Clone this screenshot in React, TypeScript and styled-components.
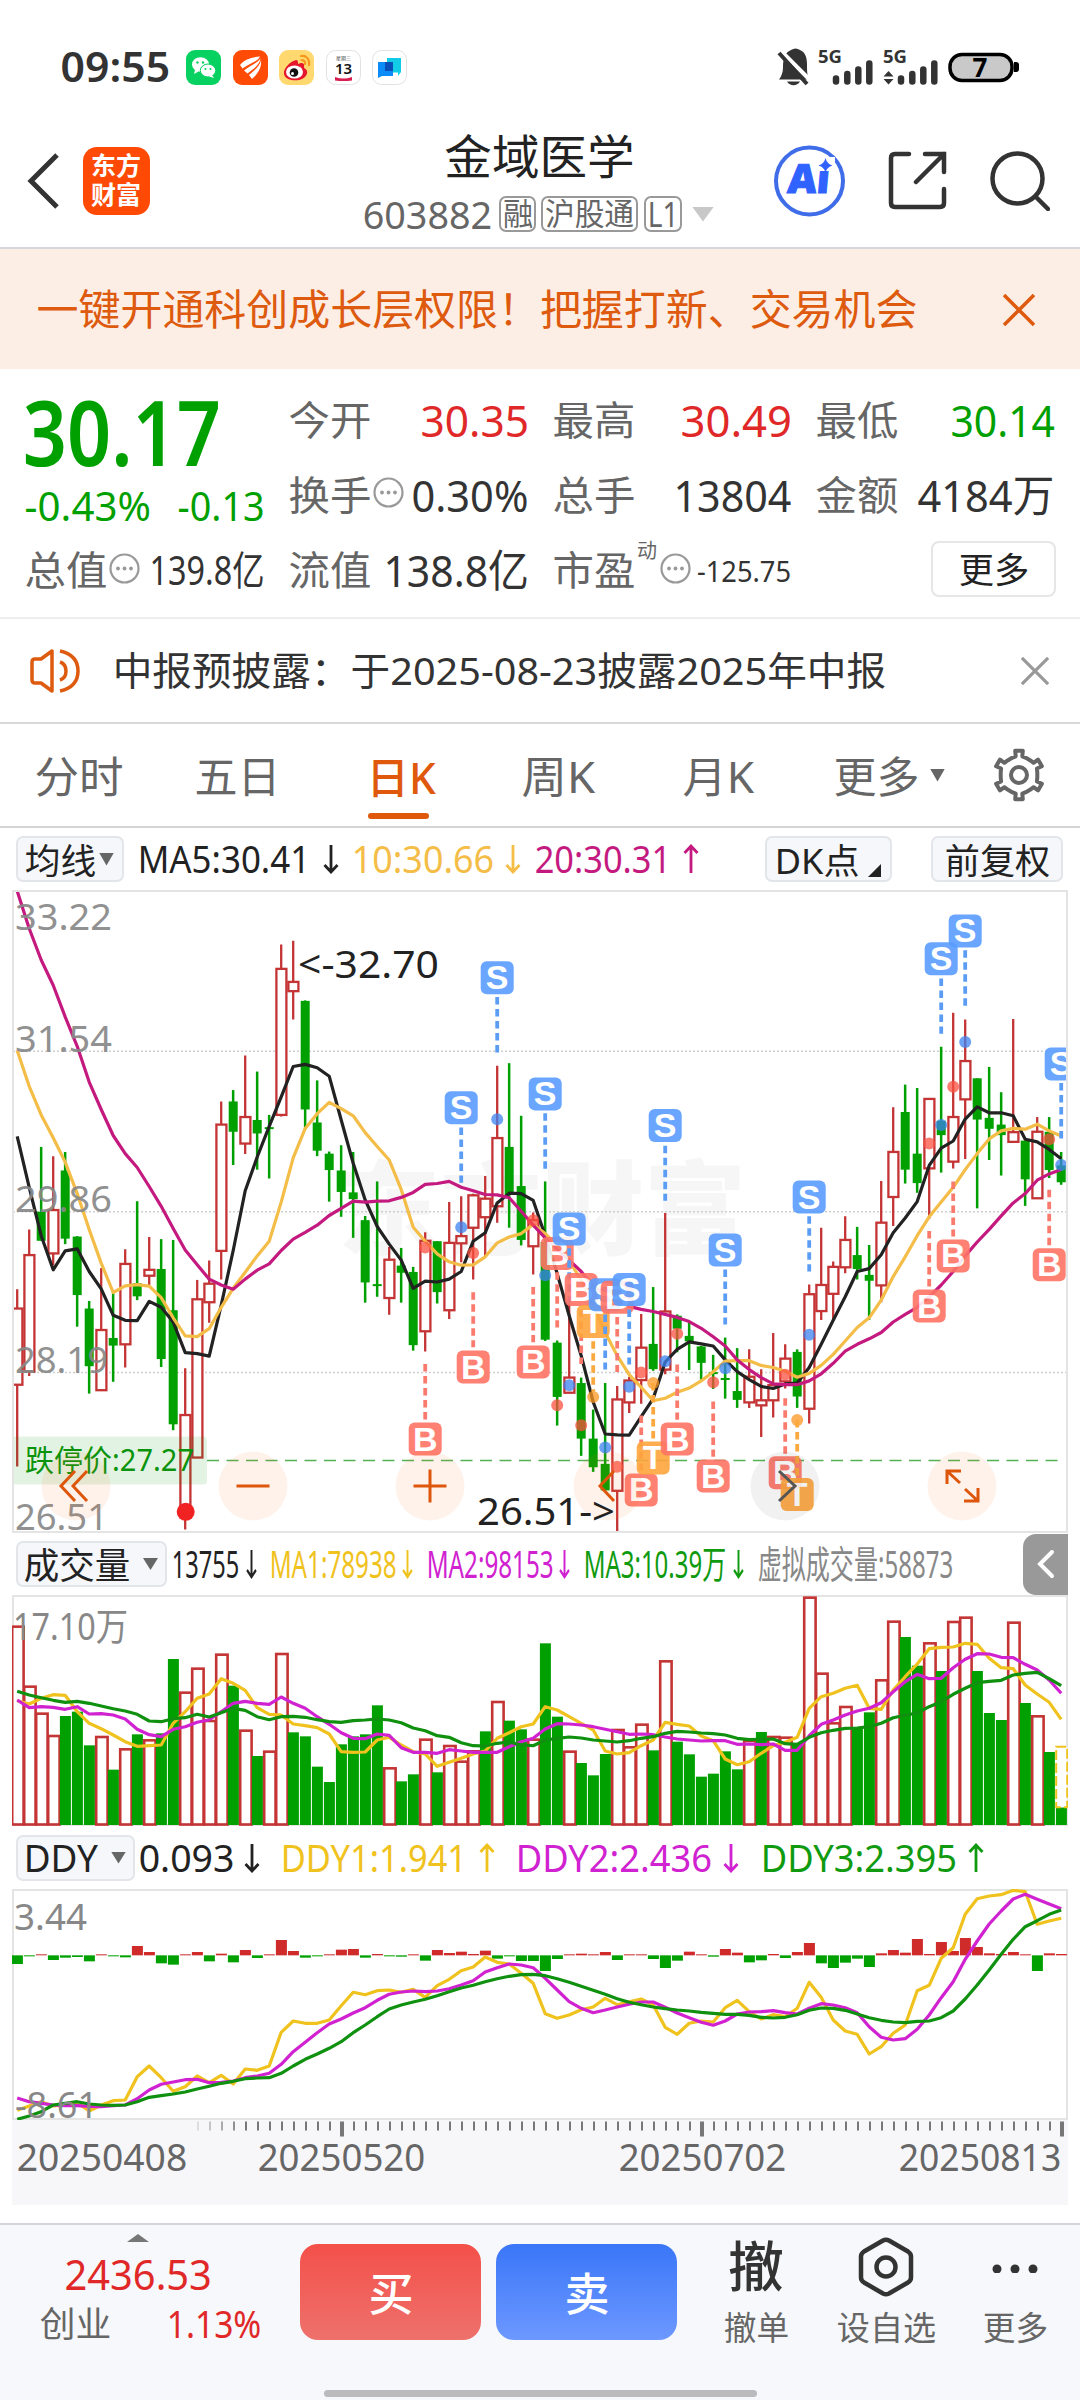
import React, { useLayoutEffect, useRef } from 'react';
import styled, { createGlobalStyle, css } from 'styled-components';

const RED = '#c43434';
const GREEN = '#00a000';
const STEP = 12;
const FIRST = 5.2;
const CHART_W = 1056;

const cx = (i: number) => FIRST + i * STEP;

/* ---------- data ---------- */

// direction, high, low, body top, body bottom
type Candle = ['R' | 'G', number, number, number, number];

const candles: Candle[] = [
  ['R', 972, 1393, 1018, 1199], ['R', 830, 1178, 891, 1168], ['G', 634, 857, 788, 857], ['R', 656, 915, 784, 887],
  ['G', 646, 865, 690, 852], ['G', 846, 1061, 847, 986], ['G', 1000, 1220, 1018, 1155], ['R', 922, 1212, 1069, 1212],
  ['G', 975, 1192, 1088, 1106], ['R', 877, 1158, 912, 1103], ['G', 763, 998, 958, 989], ['R', 848, 962, 926, 940],
  ['G', 853, 1157, 924, 1138], ['G', 855, 1307, 1022, 1293], ['R', 1160, 1543, 1271, 1500], ['R', 950, 1372, 996, 1372],
  ['R', 904, 1052, 959, 1003], ['R', 526, 949, 581, 881], ['G', 499, 677, 526, 598], ['R', 417, 651, 563, 626],
  ['G', 455, 688, 570, 602], ['G', 558, 709, 587, 591], ['R', 153, 562, 211, 558], ['R', 144, 331, 242, 264],
  ['G', 286, 590, 287, 545], ['G', 476, 656, 576, 643], ['G', 645, 764, 650, 689], ['G', 630, 800, 690, 741],
  ['G', 646, 850, 742, 758], ['G', 798, 1004, 808, 956], ['G', 716, 990, 960, 964], ['R', 872, 1033, 902, 993],
  ['G', 874, 1004, 916, 933], ['G', 919, 1118, 931, 1105], ['R', 837, 1120, 857, 1072], ['G', 858, 1006, 858, 979],
  ['R', 765, 1043, 862, 1022], ['R', 751, 908, 846, 863], ['R', 745, 949, 749, 826], ['R', 703, 893, 757, 801],
  ['R', 441, 814, 613, 775], ['G', 435, 826, 634, 748], ['G', 560, 868, 727, 855], ['R', 790, 937, 808, 870],
  ['G', 716, 1095, 860, 1092], ['G', 1094, 1296, 1099, 1228], ['R', 1000, 1218, 1182, 1218], ['G', 1182, 1368, 1195, 1327],
  ['G', 1258, 1406, 1327, 1395], ['G', 1195, 1450, 1387, 1450], ['R', 1202, 1551, 1234, 1451], ['R', 1180, 1266, 1189, 1241],
  ['R', 1031, 1244, 1111, 1188], ['G', 967, 1166, 1102, 1162], ['R', 791, 1174, 1025, 1163], ['G', 1032, 1122, 1035, 1066],
  ['G', 1048, 1164, 1083, 1096], ['G', 1107, 1187, 1108, 1147], ['G', 1128, 1209, 1169, 1173], ['G', 1087, 1232, 1183, 1187],
  ['G', 1112, 1254, 1214, 1235], ['R', 1115, 1254, 1180, 1241], ['R', 1162, 1323, 1236, 1248], ['R', 1076, 1277, 1200, 1236],
  ['R', 1103, 1208, 1137, 1191], ['G', 1115, 1254, 1121, 1227], ['R', 961, 1291, 984, 1256], ['R', 826, 1045, 962, 1024],
  ['R', 906, 1045, 919, 983], ['R', 799, 934, 855, 920], ['G', 824, 949, 891, 924], ['G', 867, 1045, 938, 952],
  ['R', 715, 1003, 814, 963], ['R', 540, 822, 646, 753], ['G', 486, 721, 551, 688], ['G', 494, 743, 650, 720],
  ['R', 520, 805, 520, 685], ['G', 396, 695, 572, 606], ['R', 315, 685, 563, 669], ['R', 331, 663, 430, 521],
  ['G', 471, 780, 471, 569], ['G', 444, 665, 565, 591], ['G', 504, 702, 581, 606], ['R', 330, 624, 599, 622],
  ['G', 619, 774, 619, 711], ['R', 563, 756, 598, 756], ['G', 563, 708, 598, 689], ['G', 646, 724, 678, 718],
];

const ma5 = [609, 730, 845, 926, 881, 876, 930, 971, 1034, 1046, 1047, 1001, 1015, 1050, 1123, 1125, 1131, 1010, 880, 738, 658, 585, 515, 443, 438, 446, 466, 570, 673, 760, 823, 865, 903, 970, 953, 955, 948, 930, 858, 838, 767, 744, 745, 761, 845, 935, 1035, 1130, 1240, 1316, 1318, 1319, 1275, 1232, 1145, 1115, 1097, 1102, 1107, 1140, 1168, 1187, 1203, 1208, 1197, 1195, 1158, 1103, 1046, 990, 930, 923, 890, 838, 803, 764, 678, 637, 620, 568, 539, 553, 553, 560, 616, 622, 640, 662];
const ma10 = [405, 490, 558, 612, 670, 745, 830, 910, 980, 964, 961, 965, 992, 1040, 1083, 1085, 1066, 1015, 970, 932, 893, 858, 765, 660, 590, 555, 528, 543, 560, 600, 633, 665, 735, 825, 858, 888, 907, 915, 914, 895, 862, 848, 840, 818, 840, 868, 905, 950, 1010, 1075, 1130, 1175, 1205, 1237, 1231, 1217, 1207, 1190, 1168, 1143, 1142, 1142, 1153, 1158, 1167, 1181, 1172, 1153, 1127, 1095, 1063, 1040, 998, 942, 895, 845, 800, 765, 730, 688, 650, 615, 596, 590, 592, 580, 596, 608];
const ma20 = [26, 115, 190, 250, 325, 395, 480, 545, 607, 650, 683, 728, 775, 828, 879, 914, 948, 962, 972, 948, 927, 912, 880, 853, 837, 820, 797, 780, 763, 765, 763, 762, 754, 742, 723, 721, 716, 730, 738, 747, 748, 755, 787, 820, 850, 877, 903, 930, 965, 985, 1003, 1013, 1020, 1025, 1032, 1039, 1049, 1065, 1085, 1107, 1140, 1163, 1182, 1197, 1199, 1199, 1190, 1173, 1148, 1119, 1103, 1090, 1075, 1050, 1032, 1015, 990, 962, 930, 893, 860, 830, 798, 767, 745, 713, 698, 688];

// letter, bar index, badge centre, dash start, dash end, dot
type Mark = ['S' | 'B' | 'T', number, number, number, number, number];

const marks: Mark[] = [
  ['B', 34, 1328, 1150, 1282, 873], ['S', 37, 541, 588, 719, 825], ['B', 38, 1157, 979, 1110, 886],
  ['S', 40, 232, 278, 410, 568], ['B', 43, 1145, 967, 1098, 808], ['S', 44, 508, 554, 686, 939],
  ['B', 45, 887, 932, 1063, 1248], ['S', 46, 829, 875, 1006, 1200], ['B', 47, 973, 1020, 1150, 1295],
  ['T', 48, 1049, 1096, 1215, 1228], ['S', 49, 985, 1032, 1163, 1348], ['B', 50, 991, 1038, 1169, 1394],
  ['S', 51, 973, 1020, 1151, 1204], ['B', 52, 1449, 1272, 1403, 1170], ['T', 53, 1373, 1195, 1328, 1195],
  ['S', 54, 583, 631, 762, 1143], ['B', 55, 1328, 1151, 1282, 1078], ['B', 58, 1416, 1239, 1370, 1193],
  ['S', 59, 879, 925, 1056, 1160], ['B', 64, 1408, 1231, 1363, 1175], ['T', 65, 1460, 1283, 1415, 1283],
  ['S', 66, 753, 799, 930, 1080], ['B', 76, 1012, 834, 966, 626], ['S', 77, 187, 234, 365, 582],
  ['B', 78, 893, 716, 847, 491], ['S', 79, 121, 167, 299, 385], ['B', 86, 914, 736, 868, 616],
  ['S', 87, 437, 482, 614, 677],
];

const markFill = { S: '#5a9dff', B: '#ff7466', T: '#ffa63c' };
const markLine = { S: '#5b9cf5', B: '#fa7b6d', T: '#fba93f' };
const markDot = { S: '#3b82f0', B: '#fb5040', T: '#fb9620' };

const volColors = 'RRRRGGGRGRGRGGRRRRGRGRRGGGGGGGGRGGRGRRRGRGGRGGRGGGRRRGRGGGGGGRGRRGRRRRGGRRGGRGRRGGGRGRGG';
const volTops = [287, 467, 548, 615, 558, 545, 646, 618, 719, 655, 613, 628, 610, 387, 485, 413, 570, 371, 467, 599, 678, 662, 369, 607, 619, 710, 756, 643, 619, 613, 526, 712, 754, 733, 626, 727, 645, 692, 661, 604, 513, 572, 598, 626, 340, 560, 662, 699, 736, 672, 597, 649, 581, 661, 391, 635, 673, 740, 731, 664, 718, 630, 606, 618, 620, 640, 200, 428, 577, 528, 591, 547, 448, 272, 321, 407, 337, 423, 273, 260, 423, 549, 570, 275, 519, 556, 666, 832];
const vol1 = [512, 522, 505, 494, 496, 545, 580, 596, 615, 635, 649, 647, 645, 580, 545, 505, 492, 446, 460, 481, 533, 553, 555, 582, 587, 593, 612, 665, 667, 666, 630, 622, 645, 665, 672, 709, 697, 685, 672, 663, 625, 608, 590, 582, 530, 540, 560, 580, 600, 663, 672, 668, 647, 630, 577, 583, 588, 618, 632, 687, 704, 695, 670, 647, 637, 622, 535, 500, 490, 475, 466, 535, 538, 480, 440, 402, 356, 352, 351, 340, 343, 385, 413, 416, 465, 492, 517, 568];
const vol2 = [510, 533, 530, 532, 538, 530, 552, 551, 555, 567, 598, 614, 620, 598, 590, 577, 569, 545, 520, 514, 520, 523, 501, 520, 535, 560, 583, 608, 625, 626, 612, 616, 653, 667, 667, 670, 659, 663, 667, 667, 667, 650, 635, 625, 597, 581, 582, 585, 590, 598, 605, 613, 612, 614, 621, 627, 630, 633, 632, 632, 643, 642, 644, 642, 661, 661, 617, 583, 570, 555, 543, 535, 518, 485, 455, 433, 446, 445, 413, 388, 371, 372, 382, 383, 403, 420, 450, 490];
const vol3 = [484, 495, 503, 511, 517, 514, 520, 528, 536, 543, 553, 573, 575, 566, 563, 553, 561, 548, 535, 541, 560, 569, 560, 559, 562, 569, 575, 577, 572, 570, 567, 570, 578, 594, 602, 617, 622, 638, 647, 648, 640, 636, 645, 647, 630, 625, 621, 624, 630, 633, 636, 632, 625, 620, 610, 604, 606, 609, 611, 615, 625, 629, 628, 627, 641, 643, 622, 608, 601, 595, 594, 590, 580, 563, 556, 549, 530, 515, 493, 475, 458, 454, 451, 435, 430, 427, 446, 467];

const ddyBars = [-26, -3, 3, -14, -7, -5, -18, 3, -3, -6, 28, 10, -24, -28, 3, 10, -18, 5, -21, 16, -8, 3, 46, 13, -7, -3, 3, 17, 19, -7, 4, -3, -4, 3, -16, 16, 7, 11, 4, 14, -10, -3, -17, -17, -47, -11, 3, 5, 3, 10, -14, 3, 3, -11, -38, -16, 11, 3, -4, 19, 8, -21, -15, 4, -8, 10, 37, -24, -38, -22, -10, -35, 6, 16, 8, 49, 4, 40, 13, 52, 25, 6, 4, 10, 3, -47, 6, 4];
const ddy1 = [841, 828, 815, 828, 825, 818, 843, 825, 812, 810, 740, 708, 743, 784, 770, 738, 758, 736, 762, 717, 721, 708, 607, 573, 580, 580, 570, 527, 487, 494, 482, 480, 487, 478, 502, 467, 448, 422, 411, 381, 397, 402, 430, 460, 551, 565, 555, 539, 531, 505, 524, 515, 507, 525, 592, 613, 580, 573, 576, 533, 511, 545, 567, 554, 560, 535, 457, 502, 570, 603, 613, 672, 650, 610, 585, 482, 466, 385, 353, 253, 206, 198, 194, 181, 185, 283, 273, 265];
const ddy2 = [804, 815, 820, 825, 827, 827, 829, 830, 827, 825, 806, 780, 763, 756, 749, 748, 758, 757, 753, 743, 738, 730, 703, 665, 637, 608, 582, 567, 549, 533, 511, 493, 486, 483, 485, 483, 476, 465, 452, 426, 413, 402, 405, 413, 445, 480, 515, 535, 548, 540, 531, 523, 516, 516, 532, 549, 563, 577, 586, 573, 552, 546, 545, 542, 548, 552, 535, 521, 525, 533, 548, 590, 622, 630, 626, 598, 555, 503, 455, 388, 333, 282, 243, 207, 193, 208, 222, 236];
const ddy3 = [868, 858, 845, 825, 820, 815, 822, 825, 826, 825, 815, 802, 797, 792, 786, 777, 769, 760, 754, 746, 744, 743, 730, 708, 688, 672, 655, 635, 608, 585, 560, 537, 525, 516, 508, 497, 485, 474, 466, 455, 446, 439, 434, 433, 437, 446, 457, 469, 481, 493, 506, 517, 524, 531, 536, 540, 543, 547, 550, 553, 553, 556, 562, 564, 562, 554, 541, 534, 535, 541, 552, 563, 571, 576, 578, 574, 573, 563, 543, 507, 465, 420, 373, 328, 290, 272, 253, 240];

/* ---------- shared pieces ---------- */

const FONT = "'Noto Sans', 'Noto Sans CJK SC', sans-serif";

const GlobalStyle = createGlobalStyle`
  * { box-sizing: border-box; }
  body {
    margin: 0;
    background: #fff;
    font-family: ${FONT};
    line-height: 1;
    color: #333;
  }
  svg { display: block; flex-shrink: 0; }
  svg text { font-family: ${FONT}; }
`;

const FitBox = styled.span<{ $w: number; $ml: number; $size?: number; $color?: string; $weight?: number }>`
  display: block;
  flex-shrink: 0;
  width: ${p => p.$w}px;
  margin-left: ${p => p.$ml}px;
  white-space: nowrap;
  ${p => p.$size && css`font-size: ${p.$size}px;`}
  ${p => p.$color && css`color: ${p.$color};`}
  ${p => p.$weight && css`font-weight: ${p.$weight};`}
`;

const FitInner = styled.span`
  display: inline-block;
  transform-origin: 0 50%;
`;

interface FitProps {
  w: number;
  ml?: number;
  size?: number;
  color?: string;
  weight?: number;
  children: React.ReactNode;
}

// Squeezes or stretches a single line so that its ink fills the given width
const Fit: React.FC<FitProps> = ({ w, ml = 0, size, color, weight, children }) => {
  const ref = useRef<HTMLSpanElement>(null);
  useLayoutEffect(() => {
    const el = ref.current;
    if (!el) return;
    const bearing = parseFloat(getComputedStyle(el).fontSize) * 0.035;
    const k = (w + bearing * 2) / el.offsetWidth;
    el.style.transform = `translate(${-bearing}px, -1px) scaleX(${k})`;
  });
  return (
    <FitBox $w={w} $ml={ml} $size={size} $color={color} $weight={weight}>
      <FitInner ref={ref}>{children}</FitInner>
    </FitBox>
  );
};

const Triangle = styled.i<{ $w: number; $h: number; $color: string; $ml?: number; $up?: boolean }>`
  flex-shrink: 0;
  width: ${p => p.$w}px;
  height: ${p => p.$h}px;
  margin-left: ${p => p.$ml || 0}px;
  background: ${p => p.$color};
  clip-path: ${p => (p.$up ? 'polygon(50% 0, 100% 100%, 0 100%)' : 'polygon(0 0, 100% 0, 50% 100%)')};
`;

const ArrowSvg = styled.svg<{ $ml: number }>`
  margin-left: ${p => p.$ml}px;
`;

const Arrow = ({ up, color, ml, w = 16 }: { up?: boolean; color: string; ml: number; w?: number }) => (
  <ArrowSvg $ml={ml} width={w} height="30" viewBox="0 0 16 30" preserveAspectRatio="none" fill="none" stroke={color} strokeWidth="2.8">
    <path d={up ? 'M8 29V2M1.500 9L8 2l6.500 7' : 'M8 1v27M1.500 21L8 28l6.500-7'} />
  </ArrowSvg>
);

/* ---------- status bar ---------- */

const Screen = styled.div`
  width: 1080px;
  height: 2400px;
  display: flex;
  flex-direction: column;
  overflow: hidden;
  background: #fff;
`;

const StatusBar = styled.div`
  height: 115px;
  padding: 19px 61px 0 62px;
  display: flex;
  align-items: center;
  justify-content: space-between;
  flex-shrink: 0;
`;

const StatusGroup = styled.div`
  display: flex;
  align-items: center;
`;

const AppIcons = styled.div`
  display: flex;
  gap: 11.5px;
  margin-left: 17px;
`;

const StatusBarView = () => (
  <StatusBar>
    <StatusGroup>
      <Fit w={107} size={42} weight={600} color="#333">09:55</Fit>
      <AppIcons>
        <svg width="35" height="35" viewBox="0 0 35 35">
          <rect width="35" height="35" rx="9" fill="#07d160" />
          <ellipse cx="14.500" cy="14.500" rx="8.500" ry="7.300" fill="#fff" />
          <path d="M9 20l-1 4 4.500-2.500z" fill="#fff" />
          <ellipse cx="22" cy="20.500" rx="7.700" ry="6.500" fill="#fff" stroke="#07d160" />
          <path d="M26 25l2 3-5-1.500z" fill="#fff" />
          <g fill="#07d160">
            <circle cx="11.500" cy="12.500" r="1.200" /><circle cx="17" cy="12.500" r="1.200" />
            <circle cx="19.500" cy="19" r="1" /><circle cx="24.500" cy="19" r="1" />
          </g>
        </svg>
        <svg width="35" height="35" viewBox="0 0 35 35">
          <rect width="35" height="35" rx="9" fill="#ff4b06" />
          <path d="M7 15C12 9 19 7 27 6.500c-2 5-9 6-17.500 12zM11 20.500c6-5 13-7 16.500-12-1 7-7 10-13 15zM16 25c5-4 11-9 12-15 1 8-4 15-9 19z" fill="#fff" />
        </svg>
        <svg width="35" height="35" viewBox="0 0 35 35">
          <rect width="35" height="35" rx="9" fill="#ffd970" />
          <path d="M17 10c-5 1-13 8-12 14s10 7 15 6 9-5 8-9c-1-3-3-2-3-4 1-4-2-5-6-3 0-2 0-4-2-4z" fill="#e6162d" />
          <ellipse cx="15.500" cy="22" rx="8.500" ry="6.600" fill="#fff" />
          <circle cx="15" cy="22.500" r="4.300" fill="#111" />
          <circle cx="13.500" cy="23.500" r="1.500" fill="#fff" />
          <path d="M22 6c5-1 9 3 8 9M22.500 10c2.500 0 4 1.500 3.500 4" fill="none" stroke="#f7971c" strokeWidth="2.200" strokeLinecap="round" />
        </svg>
        <svg width="35" height="35" viewBox="0 0 35 35">
          <rect x=".5" y=".5" width="34" height="34" rx="9" fill="#fff" stroke="#e2e2e2" />
          <text x="17.500" y="10" fontSize="5" textAnchor="middle" fill="#444">星期三</text>
          <text x="17.500" y="24" fontSize="15" fontWeight="600" textAnchor="middle" fill="#111">13</text>
          <path d="M9 27q8.500 3 17 0v3.500q-8.500 1-17 0z" fill="#d81e4e" />
        </svg>
        <svg width="35" height="35" viewBox="0 0 35 35">
          <rect x=".5" y=".5" width="34" height="34" rx="9" fill="#fff" stroke="#e2e2e2" />
          <path d="M15 8h14v14l-3 4v-3.500H15z" fill="#12cbe6" />
          <path d="M6 12h15v14H10l-4 2z" fill="#0a8bf8" />
          <rect x="13" y="12" width="8" height="9" fill="#0a4fb8" />
        </svg>
      </AppIcons>
    </StatusGroup>
    <svg width="242" height="40" viewBox="777 47 242 40">
      <path d="M779 79.500q4-5 4-12.500c0-10 3-15 8-17 3-2 6-2 9 0 5 2 7 7 7 14 0 8 0 11 2.500 15.500zM787 81.500h13c-3 5-10 5-13 0z" fill="#333" />
      <path d="M781 51l29 29" stroke="#fff" strokeWidth="4" />
      <path d="M779 53l28 31" stroke="#333" strokeWidth="4" />
      <text x="818" y="63" fontSize="18.500" fontWeight="700" fill="#333" textLength="24" lengthAdjust="spacingAndGlyphs">5G</text>
      <text x="883" y="63" fontSize="18.500" fontWeight="700" fill="#333" textLength="24" lengthAdjust="spacingAndGlyphs">5G</text>
      <g stroke="#333" strokeWidth="6.500" strokeLinecap="round">
        <path d="M836 78.500v3M847.300 74v7.500M858.300 69.500v12M869.300 63.500v18" />
        <path d="M901 78.500v3M912.300 74v7.500M923.300 69.500v12M934.300 63.500v18" />
      </g>
      <path d="M883.500 76.500l5-5.500 5 5.500zM883.500 79l5 5.500 5-5.500z" fill="#333" />
      <rect x="950" y="54.500" width="62" height="26" rx="12" fill="#c9c9c9" stroke="#000" strokeWidth="3.500" />
      <path d="M1014 62h2q3 0 3 3v4q0 3-3 3h-2z" fill="#000" />
      <text x="980" y="76.500" fontSize="26" fontWeight="700" textAnchor="middle" fill="#000">7</text>
    </svg>
  </StatusBar>
);

/* ---------- header ---------- */

const Header = styled.header`
  height: 134px;
  padding: 0 30px 0 27px;
  display: grid;
  grid-template-columns: 338px 1fr 277px;
  align-items: center;
  border-bottom: 2px solid #d5d7dc;
  flex-shrink: 0;
`;

const HeaderLeft = styled.div`
  display: flex;
  align-items: center;
  gap: 24px;
`;

const Brand = styled.div`
  width: 67px;
  height: 68px;
  border-radius: 14px;
  background: #ff4a05;
  color: #fff;
  font-size: 25px;
  font-weight: 700;
  line-height: 29px;
  padding: 4px 0 0 8px;
`;

const TitleBlock = styled.div`
  display: flex;
  flex-direction: column;
  gap: 15px;
  padding-top: 4px;
`;

const CodeRow = styled.div`
  display: flex;
  align-items: center;
  height: 36px;
`;

const CodeTag = styled.span<{ $w: number; $ml: number }>`
  display: flex;
  align-items: center;
  justify-content: center;
  width: ${p => p.$w}px;
  height: 36px;
  margin-left: ${p => p.$ml}px;
  border: 2px solid #999;
  border-radius: 7px;
  color: #666;
`;

const HeaderIcons = styled.div`
  display: flex;
  align-items: center;
  justify-content: flex-end;
  gap: 42px;
`;

const HeaderView = () => (
  <Header>
    <HeaderLeft>
      <svg width="32" height="56" viewBox="0 0 32 56" fill="none" stroke="#333" strokeWidth="5">
        <path d="M30 2L4 28l26 26" />
      </svg>
      <Brand>东方<br />财富</Brand>
    </HeaderLeft>
    <TitleBlock>
      <Fit w={187} ml={81} size={47} color="#222">金域医学</Fit>
      <CodeRow>
        <Fit w={127} ml={-1} size={39} color="#666">603882</Fit>
        <CodeTag $w={37} $ml={8}><Fit w={28} size={31}>融</Fit></CodeTag>
        <CodeTag $w={97} $ml={5}><Fit w={87} size={31}>沪股通</Fit></CodeTag>
        <CodeTag $w={38} $ml={6}><Fit w={28} size={35}>L1</Fit></CodeTag>
        <Triangle $w={22} $h={15} $color="#c8c8c8" $ml={10} />
      </CodeRow>
    </TitleBlock>
    <HeaderIcons>
      <svg width="72" height="72" viewBox="0 0 72 72">
        <circle cx="35.500" cy="36" r="33.500" fill="none" stroke="#3f6ce8" strokeWidth="4" />
        <text
          x="17"
          y="48.500"
          fontSize="40"
          fontWeight="900"
          fill="#2f62ff"
          stroke="#2f62ff"
          textLength="42"
          lengthAdjust="spacingAndGlyphs"
          transform="skewX(-5)"
        >
          Ai
        </text>
        <path d="M43 12h18v14H43z" fill="#fff" />
        <path d="M51.500 13q1.500 6 7 7.500-5.500 1.500-7 7-1.500-5.500-7-7 5.500-1.500 7-7.500z" fill="#2f62ff" />
      </svg>
      <svg width="60" height="60" viewBox="0 0 60 60" fill="none" stroke="#333" strokeWidth="4.500" strokeLinecap="round">
        <path d="M21 3H7Q3 3 3 7v45q0 4 4 4h45q4 0 4-4V38M37 3h19v18M56 3L28 31" />
      </svg>
      <svg width="60" height="60" viewBox="0 0 60 60" fill="none" stroke="#333" strokeWidth="4.500" strokeLinecap="round">
        <circle cx="27.500" cy="27.500" r="25" />
        <path d="M46 46l12 12" />
      </svg>
    </HeaderIcons>
  </Header>
);

/* ---------- banner, quote, notice ---------- */

const Banner = styled.div`
  height: 120px;
  padding: 2px 45px 0 38px;
  display: flex;
  align-items: center;
  justify-content: space-between;
  background: #fceee5;
  flex-shrink: 0;
`;

const Cross = ({ size, color }: { size: number; color: string }) => (
  <svg width={size} height={size} viewBox="0 0 32 32" fill="none" stroke={color} strokeWidth="3.600">
    <path d="M1 1l30 30M31 1L1 31" />
  </svg>
);

const Quote = styled.section`
  height: 250px;
  padding: 14px 24px 0 26px;
  display: grid;
  grid-template-columns: 237px 237px 236px 236px;
  grid-template-rows: 75px 75px 76px;
  column-gap: 27px;
  border-bottom: 2px solid #eee;
  flex-shrink: 0;
`;

const PriceCell = styled.div`
  grid-row: span 2;
  display: flex;
  flex-direction: column;
  color: ${GREEN};
  gap: 10px;
  padding-top: 4px;
`;

const ChangeRow = styled.div`
  display: flex;
  justify-content: space-between;
`;

const Cell = styled.div`
  display: flex;
  align-items: center;
  justify-content: space-between;
`;

const CellLabel = styled.div`
  display: flex;
  align-items: center;
  gap: 3px;
`;

const Dynamic = styled.span`
  align-self: flex-start;
  font-size: 20px;
  color: #666;
  margin-top: -10px;
`;

const MoreButton = styled.button`
  display: flex;
  align-items: center;
  justify-content: center;
  width: 125px;
  height: 56px;
  padding: 0;
  margin: -5px -3px 0 auto;
  border: 2px solid #e6e6e6;
  border-radius: 8px;
  background: #fff;
  font-family: inherit;
`;

const InfoSvg = styled.svg`
  margin-top: -6px;
`;

const InfoDot = () => (
  <InfoSvg width="31" height="31" viewBox="0 0 31 31">
    <circle cx="15.500" cy="15.500" r="14" fill="none" stroke="#999" strokeWidth="2.200" />
    <g fill="#999"><circle cx="9" cy="15.500" r="1.900" /><circle cx="15.500" cy="15.500" r="1.900" /><circle cx="22" cy="15.500" r="1.900" /></g>
  </InfoSvg>
);

interface StatProps {
  label: string;
  value: string;
  w: number;
  color?: string;
  size?: number;
  info?: boolean;
  sup?: string;
}

const Stat: React.FC<StatProps> = ({ label, value, w, color = '#333', size = 44, info, sup }) => (
  <Cell>
    <CellLabel>
      <Fit w={80} size={40} color="#666">{label}</Fit>
      {sup && <Dynamic>{sup}</Dynamic>}
      {info && <InfoDot />}
    </CellLabel>
    <Fit w={w} size={size} color={color}>{value}</Fit>
  </Cell>
);

const Notice = styled.div`
  height: 105px;
  padding: 0 31px 0 30px;
  display: flex;
  align-items: center;
  border-bottom: 2px solid #d8d8d8;
  flex-shrink: 0;
`;

const Spacer = styled.div`
  flex: 1;
`;

/* ---------- tabs ---------- */

const Tabs = styled.nav`
  height: 104px;
  display: flex;
  align-items: center;
  border-bottom: 2px solid #d5d5d8;
  color: #666;
  flex-shrink: 0;
`;

const ActiveTab = styled.div`
  align-self: stretch;
  width: 66px;
  margin-left: 89px;
  display: flex;
  flex-direction: column;
  justify-content: space-between;
  padding: 33px 0 7px;
  color: #e0580c;

  &::after {
    content: '';
    width: 61px;
    height: 6px;
    border-radius: 3px;
    background: #e0580c;
  }
`;

const TabText = styled.div<{ $ml: number }>`
  margin: 5px 0 0 ${p => p.$ml}px;
`;

const gearPath = () => {
  const pts: string[] = [];
  const corners: [number, number][] = [[-22, 18.500], [-10, 19], [-9, 24.500], [9, 24.500], [10, 19], [22, 18.500]];
  for (let k = 0; k < 6; k++) {
    corners.forEach(([a, r]) => {
      const t = ((k * 60 - 90 + a) * Math.PI) / 180;
      pts.push(`${(27 + r * Math.cos(t)).toFixed(1)} ${(27 + r * Math.sin(t)).toFixed(1)}`);
    });
  }
  return `M${pts.join('L')}Z`;
};

const GearSvg = styled.svg`
  margin-left: 47px;
`;

const TabsView = () => (
  <Tabs>
    <TabText $ml={36}><Fit w={86} size={43}>分时</Fit></TabText>
    <TabText $ml={74}><Fit w={83} size={43}>五日</Fit></TabText>
    <ActiveTab><Fit w={66} size={43} weight={500}>日K</Fit></ActiveTab>
    <TabText $ml={89}><Fit w={71} size={43}>周K</Fit></TabText>
    <TabText $ml={90}><Fit w={69} size={43}>月K</Fit></TabText>
    <TabText $ml={82}><Fit w={83} size={43}>更多</Fit></TabText>
    <Triangle $w={15} $h={13} $color="#666" $ml={12} />
    <GearSvg width="54" height="54" viewBox="0 0 54 54" fill="none" stroke="#666" strokeWidth="4">
      <path d={gearPath()} strokeLinejoin="round" />
      <circle cx="27" cy="27" r="8" />
    </GearSvg>
  </Tabs>
);

/* ---------- legends ---------- */

const Legend = styled.div<{ $h: number }>`
  height: ${p => p.$h}px;
  padding-left: 16px;
  display: flex;
  align-items: center;
  font-size: 38px;
  color: #222;
  flex-shrink: 0;
`;

const Chip = styled.button<{ $w: number; $ml?: number }>`
  display: flex;
  align-items: center;
  justify-content: center;
  flex-shrink: 0;
  width: ${p => p.$w}px;
  height: 46px;
  margin: 0 0 0 ${p => p.$ml || 0}px;
  padding: 0;
  border: 2px solid #e2e5ea;
  border-radius: 7px;
  background: #f5f7fa;
  color: #222;
  font-family: inherit;
`;

const Corner = styled.i`
  width: 13px;
  height: 13px;
  margin: 23px 0 0 10px;
  background: #222;
  clip-path: polygon(100% 0, 100% 100%, 0 100%);
`;

const Collapse = styled.button`
  display: flex;
  align-items: center;
  justify-content: center;
  width: 45px;
  height: 61px;
  margin: 0 12px 0 auto;
  padding: 0;
  border: 0;
  border-radius: 13px 0 0 13px;
  background: #999;
`;

/* ---------- charts ---------- */

const ChartSvg = styled.svg`
  margin-left: 12px;
`;

const Trend = ({ data, y, color }: { data: number[]; y: (v: number) => number; color: string }) => (
  <polyline
    points={data.map((v, i) => `${cx(i)},${y(v).toFixed(1)}`).join(' ')}
    fill="none"
    stroke={color}
    strokeWidth="3.200"
    strokeLinejoin="round"
  />
);

const ky = (v: number) => (v - 26) / 2.3758 + 1;

const floatButtons: [number, string][] = [
  [64, 'M-1-15l-14 15 14 15M11-15l-14 15 14 15'],
  [241, 'M-16.500 0h33'],
  [418, 'M-16.500 0h33M0-16.500v33'],
  [596, 'M6-15l-14 15 14 15'],
  [773, 'M-6-15L10 0-6 15'],
  [950, 'M-15-2v-13h14M-15-15l13 12M16 2v13H2M16 15L3 3'],
];

const KLine = () => (
  <ChartSvg width={CHART_W} height="643" viewBox={`0 0 ${CHART_W} 643`}>
    <text x="326" y="357" fontSize="102" fontWeight="900" fill="#f6f6f6" textLength="408">东方财富</text>
    {[407, 788, 1170].map(v => (
      <path key={v} d={`M1 ${ky(v)}H${CHART_W - 1}`} stroke="#cfcfcf" strokeWidth="1.500" strokeDasharray="2 2" />
    ))}
    <path d={`M195 ${ky(1379)}H${CHART_W - 6}`} stroke="#53b153" strokeWidth="1.600" strokeDasharray="12 7.500" />
    {candles.map(([dir, hi, lo, top, bottom], i) => {
      const x = cx(i);
      if (dir === 'G') {
        return (
          <g key={i} fill={GREEN}>
            <rect x={x - 1.3} y={ky(hi)} width="2.500" height={ky(lo) - ky(hi)} />
            <rect x={x - 4.5} y={ky(top)} width="9" height={Math.max(2, ky(bottom) - ky(top))} />
          </g>
        );
      }
      return (
        <g key={i} stroke={RED} strokeWidth="2.300">
          <path d={`M${x} ${ky(hi)}V${ky(top)}M${x} ${ky(bottom)}V${ky(lo)}`} />
          <rect x={x - 4.8} y={ky(top)} width="10" height={ky(bottom) - ky(top)} fill="#fff" />
        </g>
      );
    })}
    <Trend data={ma5} y={ky} color="#222" />
    <Trend data={ma10} y={ky} color="#f4bd48" />
    <Trend data={ma20} y={ky} color="#c41a80" />
    <circle cx={cx(14) + 0.5} cy={ky(1501)} r="9" fill="#f02222" />
    <g fontSize="37" fill="#888">
      {([['33.22', 118], ['31.54', 408], ['29.86', 789], ['28.19', 1170], ['26.51', 1544]] as [string, number][]).map(([t, v]) => (
        <text key={t} x="3" y={ky(v)} textLength={t.endsWith('1') || t.endsWith('9') ? 93 : 97} lengthAdjust="spacingAndGlyphs" opacity=".92">{t}</text>
      ))}
    </g>
    <rect y={ky(1322)} width="195" height="48" rx="4" fill="#009600" fillOpacity=".11" />
    <text x="13" y={ky(1403)} fontSize="30" fill="#0b930b" textLength="169" lengthAdjust="spacingAndGlyphs">跌停价:27.27</text>
    <text x="286" y={ky(232)} fontSize="38" fill="#222" textLength="141" lengthAdjust="spacingAndGlyphs">&lt;-32.70</text>
    {marks.map(([type, i, badge, from, to, dot]) => (
      <g key={`${type}${i}`}>
        <circle cx={cx(i)} cy={ky(dot)} r="6" fill={markDot[type]} opacity=".75" />
        <path d={`M${cx(i)} ${ky(from)}V${ky(to)}`} stroke={markLine[type]} strokeWidth="3.800" strokeDasharray="7.500 4.500" />
        <g opacity=".9">
          <rect x={cx(i) - 16.5} y={ky(badge) - 16.5} width="33" height="33" rx="6" fill={markFill[type]} />
          <text x={cx(i)} y={ky(badge) + 11.5} fontSize="34" fontWeight="700" fill="#fff" textAnchor="middle" style={{ fontFamily: "'Liberation Sans', sans-serif" }}>{type}</text>
        </g>
      </g>
    ))}
    {floatButtons.map(([x, d]) => (
      <g key={x} transform={`translate(${x} 596)`} fill="none">
        <circle r="34.500" fill={x === 773 ? '#000' : '#ff6a1e'} fillOpacity={x === 773 ? 0.055 : 0.09} />
        <path d={d} stroke={x === 773 ? '#555' : '#dd560c'} strokeWidth="3" />
      </g>
    ))}
    <text x="465" y={ky(1532)} fontSize="38" fill="#222" textLength="138" lengthAdjust="spacingAndGlyphs">26.51-&gt;</text>
    <rect x="1" y="1" width={CHART_W - 2} height="641" fill="none" stroke="#e4e4e4" strokeWidth="2" />
  </ChartSvg>
);

const vy = (v: number) => (v - 198) / 3 + 1;

const Volume = () => (
  <ChartSvg width={CHART_W} height="231" viewBox={`0 0 ${CHART_W} 231`}>
    <rect x="1" y="1" width={CHART_W - 2} height="229" fill="none" stroke="#e4e4e4" strokeWidth="2" />
    {volTops.map((v, i) =>
      volColors[i] === 'G' ? (
        <rect key={i} x={cx(i) - 5.3} y={vy(v)} width="11" height={vy(885) - vy(v)} fill={GREEN} />
      ) : (
        <rect key={i} x={cx(i) - 5} y={vy(v) + 1} width="11.400" height={vy(885) - vy(v) - 1.500} fill="#fff" stroke={RED} strokeWidth="2.600" />
      ),
    )}
    <rect x={cx(87) - 5} y={vy(650)} width="11" height={vy(832) - vy(650)} fill="#fff" stroke="#efc31e" strokeWidth="2" strokeDasharray="10 3" />
    <Trend data={vol1} y={vy} color="#f0c21e" />
    <Trend data={vol2} y={vy} color="#d022d0" />
    <Trend data={vol3} y={vy} color="#0f900f" />
    <text x="1" y="45" fontSize="38" fill="#888" textLength="115" lengthAdjust="spacingAndGlyphs">17.10万</text>
  </ChartSvg>
);

const dy = (v: number) => (v - 180) / 3 + 1;

const Ddy = () => (
  <ChartSvg width={CHART_W} height="231" viewBox={`0 0 ${CHART_W} 231`}>
    <rect x="1" y="1" width={CHART_W - 2} height="229" fill="none" stroke="#e4e4e4" strokeWidth="2" />
    {ddyBars.map((v, i) => (
      <rect
        key={i}
        x={cx(i) - 5.3}
        y={dy(376) - Math.max(v, 0) / 3}
        width="11"
        height={Math.max(1, Math.abs(v) / 3)}
        fill={v > 0 ? '#cf2b2b' : GREEN}
      />
    ))}
    <Trend data={ddy1} y={dy} color="#f0c21e" />
    <Trend data={ddy2} y={dy} color="#d022d0" />
    <Trend data={ddy3} y={dy} color="#0f900f" />
    <g fontSize="37" fill="#888">
      <text x="2" y="41" textLength="73" lengthAdjust="spacingAndGlyphs">3.44</text>
      <text x="3" y="229" textLength="83" lengthAdjust="spacingAndGlyphs">-8.61</text>
    </g>
  </ChartSvg>
);

const Axis = styled.div`
  width: 1056px;
  height: 85px;
  margin-left: 12px;
  background: #f7f7fa;
  flex-shrink: 0;
`;

const Dates = styled.div`
  display: flex;
  align-items: center;
  height: 38px;
  font-size: 38px;
  color: #666;
`;

const Ruler = () => (
  <svg width="1056" height="18" viewBox="0 0 1056 18">
    {Array.from({ length: 73 }, (_, k) => {
      const major = k % 30 === 12;
      return (
        <rect
          key={k}
          x={186 + k * STEP - (major ? 2 : 1)}
          y="1.500"
          width={major ? 4 : 2}
          height={major ? 15 : 9}
          fill="#777"
          opacity={Math.min(1, 0.2 + k * 0.2)}
        />
      );
    })}
  </svg>
);

/* ---------- bottom bar ---------- */

const BottomBar = styled.footer`
  margin-top: 18px;
  flex: 1;
  display: flex;
  flex-direction: column;
  justify-content: space-between;
  align-items: center;
  padding-bottom: 3px;
  background: #f7f8fb;
  border-top: 2px solid #d3d6db;
`;

const BottomRow = styled.div`
  width: 1080px;
  display: flex;
  padding: 9px 0 0 41px;
`;

const IndexBox = styled.div`
  width: 219px;
  display: flex;
  flex-direction: column;
  align-items: center;
  color: #e02828;
`;

const IndexRow = styled.div`
  width: 219px;
  display: flex;
  align-items: center;
  justify-content: space-between;
  margin-top: 9px;
`;

const IndexValue = styled.div`
  margin: 12px 0 0 -25px;
`;

const ArrowSlot = styled.div`
  display: flex;
  margin-left: -25px;
`;

const TradeButton = styled.button<{ $from: string; $to: string; $ml: number }>`
  display: flex;
  align-items: center;
  justify-content: center;
  width: 181px;
  height: 96px;
  margin: 10px 0 0 ${p => p.$ml}px;
  padding: 0;
  border: 0;
  border-radius: 18px;
  background: linear-gradient(${p => p.$from}, ${p => p.$to});
  color: #fff;
  font-family: inherit;
`;

const Action = styled.div<{ $w: number; $ml: number }>`
  width: ${p => p.$w}px;
  margin: 3px 0 0 ${p => p.$ml}px;
  display: flex;
  flex-direction: column;
  align-items: center;
  color: #666;
`;

const ActionIcon = styled.div`
  height: 60px;
  display: flex;
  align-items: center;
  justify-content: center;
  margin-bottom: 15px;
`;

const HomeIndicator = styled.div`
  width: 433px;
  height: 7px;
  border-radius: 4px;
  background: #bbbbbe;
`;

const App: React.FC = () => (
  <Screen>
    <GlobalStyle />
    <StatusBarView />
    <HeaderView />
    <Banner>
      <Fit w={878} size={42} color="#dd5a0e">一键开通科创成长层权限！把握打新、交易机会</Fit>
      <Cross size={32} color="#dd5a0e" />
    </Banner>
    <Quote>
      <PriceCell>
        <Fit w={192} size={90} weight={600}>30.17</Fit>
        <ChangeRow>
          <Fit w={123} size={40}>-0.43%</Fit>
          <Fit w={84} size={40}>-0.13</Fit>
        </ChangeRow>
      </PriceCell>
      <Stat label="今开" value="30.35" w={105} color="#e02828" />
      <Stat label="最高" value="30.49" w={108} color="#e02828" />
      <Stat label="最低" value="30.14" w={101} color={GREEN} />
      <Stat label="换手" value="0.30%" w={114} info />
      <Stat label="总手" value="13804" w={115} />
      <Stat label="金额" value="4184万" w={134} />
      <Stat label="总值" value="139.8亿" w={112} size={40} info />
      <Stat label="流值" value="138.8亿" w={142} />
      <Stat label="市盈" value="-125.75" w={92} size={29} info sup="动" />
      <Cell>
        <MoreButton><Fit w={68} size={35} color="#222">更多</Fit></MoreButton>
      </Cell>
    </Quote>
    <Notice>
      <svg width="50" height="44" viewBox="0 0 50 44" fill="none" stroke="#dd5a0e" strokeWidth="3.500" strokeLinejoin="round">
        <path d="M2 13q0-3 3-3h6L22 2v40L11 34H5q-3 0-3-3z" />
        <path d="M30 13q6 2 6 9t-6 9M30 2q18 4 18 20T30 42" />
      </svg>
      <Fit w={771} ml={34} size={39} color="#333">中报预披露：于2025-08-23披露2025年中报</Fit>
      <Spacer />
      <Cross size={28} color="#999" />
    </Notice>
    <TabsView />

    <Legend $h={62}>
      <Chip $w={108}>
        <Fit w={69} size={35}>均线</Fit>
        <Triangle $w={15} $h={13} $color="#666" $ml={4} />
      </Chip>
      <Fit w={170} ml={15}>MA5:30.41</Fit>
      <Arrow color="#222" ml={14} />
      <Fit w={140} ml={14} color="#f4bd48">10:30.66</Fit>
      <Arrow color="#f4bd48" ml={12} />
      <Fit w={134} ml={15} color="#c41a80">20:30.31</Fit>
      <Arrow up color="#c41a80" ml={13} />
      <Chip $w={127} $ml={66}>
        <Fit w={82} size={35}>DK点</Fit>
        <Corner />
      </Chip>
      <Chip $w={132} $ml={39}><Fit w={103} size={35}>前复权</Fit></Chip>
    </Legend>
    <KLine />

    <Legend $h={62}>
      <Chip $w={151}>
        <Fit w={104} size={36}>成交量</Fit>
        <Triangle $w={15} $h={12} $color="#666" $ml={14} />
      </Chip>
      <Fit w={65} ml={6}>13755</Fit>
      <Arrow color="#222" ml={8} w={11} />
      <Fit w={124} ml={14} color="#f0c21e">MA1:78938</Fit>
      <Arrow color="#f0c21e" ml={7} w={11} />
      <Fit w={124} ml={15} color="#d022d0">MA2:98153</Fit>
      <Arrow color="#d022d0" ml={7} w={11} />
      <Fit w={140} ml={15} color="#0f9a0f">MA3:10.39万</Fit>
      <Arrow color="#0f9a0f" ml={8} w={11} />
      <Fit w={193} ml={15} color="#888">虚拟成交量:58873</Fit>
      <Collapse>
        <svg width="18" height="30" viewBox="0 0 18 30" fill="none" stroke="#fff" strokeWidth="4" strokeLinecap="round">
          <path d="M15 3L3 15l12 12" />
        </svg>
      </Collapse>
    </Legend>
    <Volume />

    <Legend $h={63}>
      <Chip $w={119}>
        <Fit w={72} size={38}>DDY</Fit>
        <Triangle $w={15} $h={12} $color="#666" $ml={14} />
      </Chip>
      <Fit w={93} ml={5}>0.093</Fit>
      <Arrow color="#222" ml={11} />
      <Fit w={184} ml={22} color="#f0c21e">DDY1:1.941</Fit>
      <Arrow up color="#f0c21e" ml={13} />
      <Fit w={194} ml={22} color="#d022d0">DDY2:2.436</Fit>
      <Arrow color="#d022d0" ml={12} />
      <Fit w={194} ml={23} color="#0f9a0f">DDY3:2.395</Fit>
      <Arrow up color="#0f9a0f" ml={12} />
    </Legend>
    <Ddy />
    <Axis>
      <Ruler />
      <Dates>
        <Fit w={168} ml={6}>20250408</Fit>
        <Fit w={165} ml={73}>20250520</Fit>
        <Fit w={165} ml={196}>20250702</Fit>
        <Fit w={160} ml={115}>20250813</Fit>
      </Dates>
    </Axis>

    <BottomBar>
      <BottomRow>
        <IndexBox>
          <ArrowSlot><Triangle $w={22} $h={8} $color="#777" $up /></ArrowSlot>
          <IndexValue><Fit w={144} size={42}>2436.53</Fit></IndexValue>
          <IndexRow>
            <Fit w={69} size={35} color="#666">创业</Fit>
            <Fit w={92} size={38}>1.13%</Fit>
          </IndexRow>
        </IndexBox>
        <TradeButton $from="#f4504a" $to="#ee716c" $ml={40}><Fit w={42} size={45} weight={500}>买</Fit></TradeButton>
        <TradeButton $from="#3a76f8" $to="#6d98ff" $ml={15}><Fit w={42} size={45} weight={500}>卖</Fit></TradeButton>
        <Action $w={66} $ml={46}>
          <ActionIcon><Fit w={52} size={54} weight={500} color="#333">撤</Fit></ActionIcon>
          <Fit w={63} size={33}>撤单</Fit>
        </Action>
        <Action $w={100} $ml={47}>
          <ActionIcon>
            <svg width="56" height="60" viewBox="0 0 56 60" fill="none" stroke="#333" strokeWidth="4.500" strokeLinejoin="round">
              <path d="M25 3.500q3-1.500 6 0l19 11q3 2 3 5v21q0 3-3 5l-19 11q-3 1.500-6 0l-19-11q-3-2-3-5v-21q0-3 3-5z" />
              <circle cx="28" cy="30" r="9.500" />
            </svg>
          </ActionIcon>
          <Fit w={97} size={33}>设自选</Fit>
        </Action>
        <Action $w={66} $ml={46}>
          <ActionIcon>
            <svg width="46" height="12" viewBox="0 0 46 12" fill="#333">
              <circle cx="5" cy="8" r="4.500" /><circle cx="23" cy="8" r="4.500" /><circle cx="41" cy="8" r="4.500" />
            </svg>
          </ActionIcon>
          <Fit w={63} size={33}>更多</Fit>
        </Action>
      </BottomRow>
      <HomeIndicator />
    </BottomBar>
  </Screen>
);

export default App;
